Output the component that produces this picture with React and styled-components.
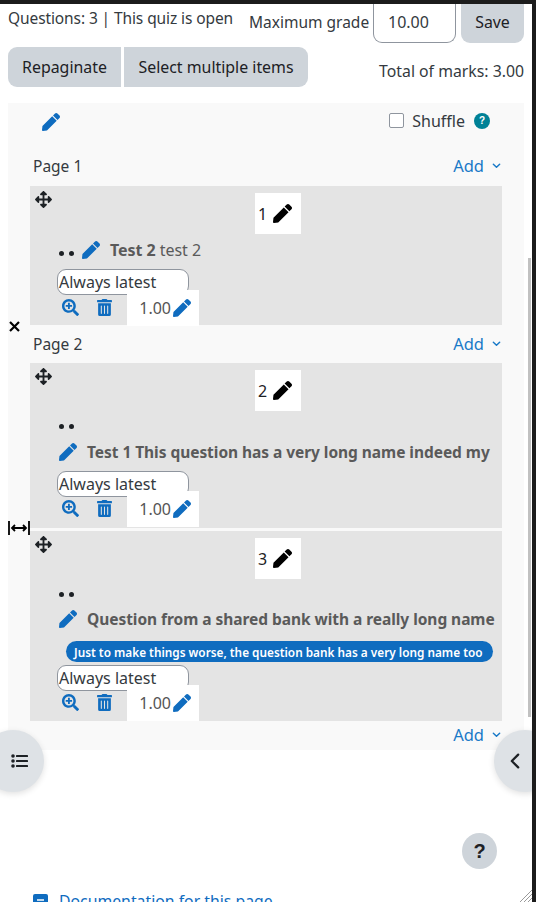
import React from 'react';
import styled, { createGlobalStyle } from 'styled-components';

const Global = createGlobalStyle`
  html, body { margin: 0; padding: 0; background: #fff; height: 902px; overflow: hidden; }
  body { font-family: "Noto Sans", "Open Sans", sans-serif; font-size: 15.5px; color: #495057; }
`;
const Frame = styled.div`position: relative; width: 536px; height: 902px; overflow: hidden; background: #fff; box-sizing: border-box; border-top: 4px solid #1c1c1c; border-right: 4px solid #1c1c1c;`;
const Scrollbar = styled.div`position: absolute; right: 1px; top: 254px; width: 3px; height: 459px; background: #c1c1c1;`;
const Content = styled.div`padding: 0 8px; color: #343a40;`;
const TopRow = styled.div`display: flex; align-items: flex-start; height: 39px;`;
const Status = styled.div`width: 241px; line-height: 29px; white-space: nowrap; letter-spacing: -0.1px;`;
const GradeLabel = styled.div`width: 124px; line-height: 37px; white-space: nowrap;`;
const GradeInput = styled.div`box-sizing: border-box; width: 83px; height: 39px; margin-right: 5px; padding-left: 14px; line-height: 36px; font-size: 16px; border: 1px solid #8f959e; border-top-width: 0; border-radius: 0 0 9px 9px; background: #fff;`;
const Btn = styled.div`display: flex; align-items: center; justify-content: center; box-sizing: border-box; font-size: 15.9px; background: #ced4da; color: #1d2125; white-space: nowrap; width: ${p => p.$w}px; height: ${p => p.$h}px; padding-bottom: ${p => p.$pb || 0}px; border-radius: ${p => p.$r};`;
const ActionRow = styled.div`display: flex; align-items: flex-start; gap: 3px; margin-top: 4px; height: 40px;`;
const Total = styled.div`margin-left: auto; line-height: 48px; white-space: nowrap; font-size: 15.8px;`;
const Panel = styled.div`margin-top: 16px; height: 647px; background: #f9f9f9; padding: 0 22px; box-sizing: border-box;`;
const PanelHead = styled.div`display: flex; align-items: center; box-sizing: border-box; height: 39px; padding: 0 0 2px 12px;`;
const Shuffle = styled.div`display: flex; align-items: center; margin: 0 12px 2px auto; color: #343a40; font-size: 16px;`;
const Check = styled.span`width: 13px; height: 13px; border: 1px solid #8f959e; border-radius: 2px; background: #fff; margin-right: 8px;`;
const Help = styled.span`display: inline-flex; align-items: center; justify-content: center; width: 16px; height: 16px; border-radius: 50%; background: #008196; color: #fff; font: 700 10px "Liberation Sans", sans-serif; margin-left: 9px;`;
const PageHead = styled.div`display: flex; align-items: center; justify-content: space-between; box-sizing: border-box; height: ${p => p.$h}px; padding: ${p => p.$pt || 0}px 0 0 3px; color: #343a40;`;
const AddLink = styled.div`display: flex; align-items: center; gap: 8px; margin: 0 1px 2px 0; font-size: 16.5px; color: #1a7ac8;`;
const Slot = styled.div`position: relative; margin: ${p => p.$mt || 0}px 0 0 0; height: ${p => p.$h}px; width: 472px; background: #e4e4e4; padding: 7px 0 0 0; box-sizing: border-box;`;
const SlotTop = styled.div`display: flex; align-items: flex-start; justify-content: space-between; height: 41px;`;
const Move = styled.span`display: flex; margin: -2px 0 0 5px;`;
const Num = styled.div`display: flex; align-items: center; gap: 6px; box-sizing: border-box; padding-left: 3px; width: 46px; height: 41px; background: #fff; font-size: 16px; color: #1d2125; margin-right: 201px;`;
const Dots = styled.div`display: flex; gap: 5px; margin: ${p => p.$m}; padding-left: 29px;`;
const Dot = styled.span`width: 5px; height: 5px; border-radius: 50%; background: #1d2125;`;
const NameRow = styled.div`display: flex; align-items: center; height: 22px; padding-left: 29px; margin-top: ${p => p.$mt}px; white-space: nowrap; color: #5a5a5a; font-size: ${p => p.$fs || 15.5}px;`;
const Name = styled.span`font-weight: 700; margin-left: 10px; letter-spacing: -0.05px;`;
const Sub = styled.span`margin-left: 4px;`;
const Badge = styled.div`display: flex; align-items: center; margin: 11px 0 0 36px; width: 427px; height: 21px; box-sizing: border-box; padding-left: 8px; border-radius: 11px; background: #0f6cbf; color: #fff; font-size: 11.8px; font-weight: 600; white-space: nowrap;`;
const Version = styled.div`box-sizing: border-box; width: 132px; height: 26px; margin: ${p => p.$mt}px 0 0 27px; border: 1px solid #8f959e; border-radius: 9px; background: #fff; padding-left: 1px; line-height: 24px; font-size: 16px; color: #343a40;`;
const Controls = styled.div`display: flex; align-items: center; position: relative; height: 35px; margin: ${p => p.$mt}px 0 0 32px;`;
const ControlGap = styled.span`width: 18px;`;
const Mark = styled.div`display: flex; align-items: center; justify-content: flex-end; gap: 2px; box-sizing: border-box; width: 72px; height: 36px; margin-left: 15px; padding-right: 8px; background: #fff; color: #555; font-size: 16px;`;
const Cursor = styled.span`position: absolute; left: ${p => p.$x}px; top: ${p => p.$y}px; display: flex; color: #000;`;
const Round = styled.div`position: absolute; top: ${p => p.$y}px; left: ${p => p.$x}px; width: 62px; height: 62px; border-radius: 50%; background: #dee2e6; display: flex; align-items: center; justify-content: center; box-shadow: 0 2px 6px rgba(0,0,0,.12);`;
const Inner = styled.span`display: flex; transform: translateX(${p => p.$tx}px);`;
const HelpRound = styled.div`position: absolute; left: 462px; top: 829px; width: 35px; height: 36px; border-radius: 50%; background: #ced4da; color: #1d2125; display: flex; align-items: center; justify-content: center; font: 700 20px "Liberation Sans", sans-serif;`;
const Doc = styled.div`position: absolute; left: 33px; top: 886px; display: flex; align-items: flex-start; gap: 11px; font-size: 15.8px; color: #0f6cbf; white-space: nowrap;`;
const DocIcon = styled.svg`margin-top: 4px;`;
const Grip = styled.svg`position: absolute; right: 0; bottom: 0;`;

const Pencil = ({ s = 18, c = '#0f6cbf' }) => (
  <svg width={s} height={s} viewBox="0 0 512 512" fill={c}><path d="M290.7 93.2l128 128-278 278-114.1 12.6C11.3 513.5-1.6 500.6.1 485.3l12.7-114.2 277.9-277.9zm207.2-19.1l-60.1-60.1c-18.7-18.7-49.1-18.7-67.9 0l-56.6 56.6 128 128 56.6-56.6c18.8-18.8 18.8-49.2 0-67.9z"/></svg>
);
const MoveIcon = () => (
  <svg width="17" height="17" viewBox="0 0 512 512" fill="#1d2125"><path d="M352.2 425.8l-79.2 79.2c-9.4 9.4-24.6 9.4-33.9 0l-79.2-79.2c-15.1-15.1-4.4-41 17-41h51.2V284H127v51.2c0 21.4-25.9 32.1-41 17L6.8 273c-9.4-9.4-9.4-24.6 0-33.9L86 159.8c15.1-15.1 41-4.4 41 17V228h101V127h-51.2c-21.4 0-32.1-25.9-17-41l79.2-79.2c9.4-9.4 24.6-9.4 33.9 0L352.1 86c15.1 15.1 4.4 41-17 41H284v101h101v-51.2c0-21.4 25.9-32.1 41-17l79.2 79.2c9.4 9.4 9.4 24.6 0 33.9L426 352.2c-15.1 15.1-41 4.4-41-17V284H284v100.8h51.2c21.4 0 32.1 25.9 17 41z"/></svg>
);
const Zoom = () => (
  <svg width="17" height="17" viewBox="0 0 512 512" fill="#0f6cbf"><path d="M304 192v32c0 6.6-5.4 12-12 12h-56v56c0 6.6-5.4 12-12 12h-32c-6.6 0-12-5.4-12-12v-56h-56c-6.6 0-12-5.4-12-12v-32c0-6.6 5.4-12 12-12h56v-56c0-6.6 5.4-12 12-12h32c6.6 0 12 5.4 12 12v56h56c6.6 0 12 5.4 12 12zm201 284.7L476.7 505c-9.4 9.4-24.6 9.4-33.9 0L343 405.3c-4.5-4.5-7-10.6-7-17V372c-35.3 27.6-79.7 44-128 44C93.1 416 0 322.9 0 208S93.1 0 208 0s208 93.1 208 208c0 48.3-16.4 92.7-44 128h16.3c6.4 0 12.5 2.5 17 7l99.7 99.7c9.3 9.4 9.3 24.6 0 34zM344 208c0-75.2-60.8-136-136-136S72 132.8 72 208s60.8 136 136 136 136-60.8 136-136z"/></svg>
);
const Trash = () => (
  <svg width="15" height="17" viewBox="0 0 448 512" fill="#0f6cbf"><path d="M32 464a48 48 0 0 0 48 48h288a48 48 0 0 0 48-48V128H32zm272-256a16 16 0 0 1 32 0v224a16 16 0 0 1-32 0zm-96 0a16 16 0 0 1 32 0v224a16 16 0 0 1-32 0zm-96 0a16 16 0 0 1 32 0v224a16 16 0 0 1-32 0zM432 32H312l-9.4-18.7A24 24 0 0 0 281.1 0H166.8a23.72 23.72 0 0 0-21.4 13.3L136 32H16A16 16 0 0 0 0 48v32a16 16 0 0 0 16 16h416a16 16 0 0 0 16-16V48a16 16 0 0 0-16-16z"/></svg>
);
const Chevron = ({ s = 9, c = '#1a7ac8', dir = 'down', w = 1.6 }) => (
  <svg width={s} height={s} viewBox="0 0 10 10" fill="none" stroke={c} strokeWidth={w} strokeLinecap="round" strokeLinejoin="round">
    <path d={dir === 'down' ? 'M1.5 3.5 5 7l3.5-3.5' : 'M7 1 3 5l4 4'} />
  </svg>
);
const ListIcon = () => (
  <svg width="17" height="14" viewBox="0 0 17 14" fill="#1d2125"><circle cx="2" cy="2" r="1.8"/><circle cx="2" cy="7" r="1.8"/><circle cx="2" cy="12" r="1.8"/><rect x="5" y="1" width="12" height="2" rx=".6"/><rect x="5" y="6" width="12" height="2" rx=".6"/><rect x="5" y="11" width="12" height="2" rx=".6"/></svg>
);

const SlotBody = ({ n, h, mt, dotsM, nameMt, title, sub, badge, verMt, ctrlMt }) => (
  <Slot $h={h} $mt={mt}>
    <SlotTop>
      <Move><MoveIcon /></Move>
      <Num>{n}<Pencil s={19} c="#000" /></Num>
    </SlotTop>
    {sub ? (
      <NameRow $mt={nameMt} $fs={16}>
        <Dots $m="6px 8px 0 -29px"><Dot /><Dot /></Dots>
        <Pencil />
        <Name>{title}</Name><Sub>{sub}</Sub>
      </NameRow>
    ) : (
      <>
        <Dots $m={dotsM}><Dot /><Dot /></Dots>
        <NameRow $mt={nameMt}><Pencil /><Name>{title}</Name></NameRow>
      </>
    )}
    {badge && <Badge>{badge}</Badge>}
    <Version $mt={verMt}>Always latest</Version>
    <Controls $mt={ctrlMt}>
      <Zoom /><ControlGap /><Trash />
      <Mark>1.00<Pencil s={18} /></Mark>
    </Controls>
  </Slot>
);

export default function App() {
  return (
    <Frame>
      <Global />
      <Content>
        <TopRow>
          <Status>Questions: 3 | This quiz is open</Status>
          <GradeLabel>Maximum grade</GradeLabel>
          <GradeInput>10.00</GradeInput>
          <Btn $w={63} $h={39} $pb={3} $r="0 0 9px 9px">Save</Btn>
        </TopRow>
        <ActionRow>
          <Btn $w={113} $h={40} $r="9px 0 0 9px">Repaginate</Btn>
          <Btn $w={184} $h={40} $r="0 9px 9px 0">Select multiple items</Btn>
          <Total>Total of marks: 3.00</Total>
        </ActionRow>
        <Panel>
          <PanelHead>
            <Pencil />
            <Shuffle><Check />Shuffle<Help>?</Help></Shuffle>
          </PanelHead>
          <PageHead $h={44} $pt={4}>Page 1<AddLink>Add<Chevron /></AddLink></PageHead>
          <SlotBody n="1" h={139} nameMt={5} title="Test 2" sub="test 2" verMt={8} ctrlMt={-5} />
          <PageHead $h={38}>Page 2<AddLink>Add<Chevron /></AddLink></PageHead>
          <SlotBody n="2" h={165} dotsM="13px 0 0" nameMt={12} title="Test 1 This question has a very long name indeed my" verMt={8} ctrlMt={-6} />
          <SlotBody n="3" h={190} mt={3} dotsM="13px 0 0" nameMt={11} title="Question from a shared bank with a really long name" badge="Just to make things worse, the question bank has a very long name too" verMt={3} ctrlMt={-6} />
          <PageHead $h={29}><span />
            <AddLink>Add<Chevron /></AddLink></PageHead>
        </Panel>
      </Content>
      <Cursor $x={8} $y={316}><svg width="13" height="13" viewBox="0 0 13 13" stroke="#000" strokeWidth="2.2"><path d="M2 2l9 9M11 2l-9 9"/></svg></Cursor>
      <Cursor $x={8} $y={517}><svg width="22" height="14" viewBox="0 0 22 14" fill="none" stroke="#000" strokeWidth="1.8"><path d="M1 0v14M21 0v14M4 7h14M7 4 4 7l3 3M15 4l3 3-3 3"/></svg></Cursor>
      <Round $x={-18} $y={726}><Inner $tx={6}><ListIcon /></Inner></Round>
      <Round $x={494} $y={726}><Inner $tx={-10}><Chevron s={16} c="#1d2125" dir="left" w={1.4} /></Inner></Round>
      <HelpRound>?</HelpRound>
      <Doc><DocIcon width="15" height="18" viewBox="0 0 15 18"><rect width="15" height="18" rx="2" fill="#0f6cbf"/><path d="M4 6h7M4 9h7" stroke="#fff" strokeWidth="1.6"/></DocIcon>Documentation for this page</Doc>
      <Scrollbar />
      <Grip width="13" height="13" viewBox="0 0 13 13" stroke="#9a9a9a" strokeWidth="1"><path d="M13 1 1 13M13 5 5 13M13 9 9 13" /></Grip>
    </Frame>
  );
}
